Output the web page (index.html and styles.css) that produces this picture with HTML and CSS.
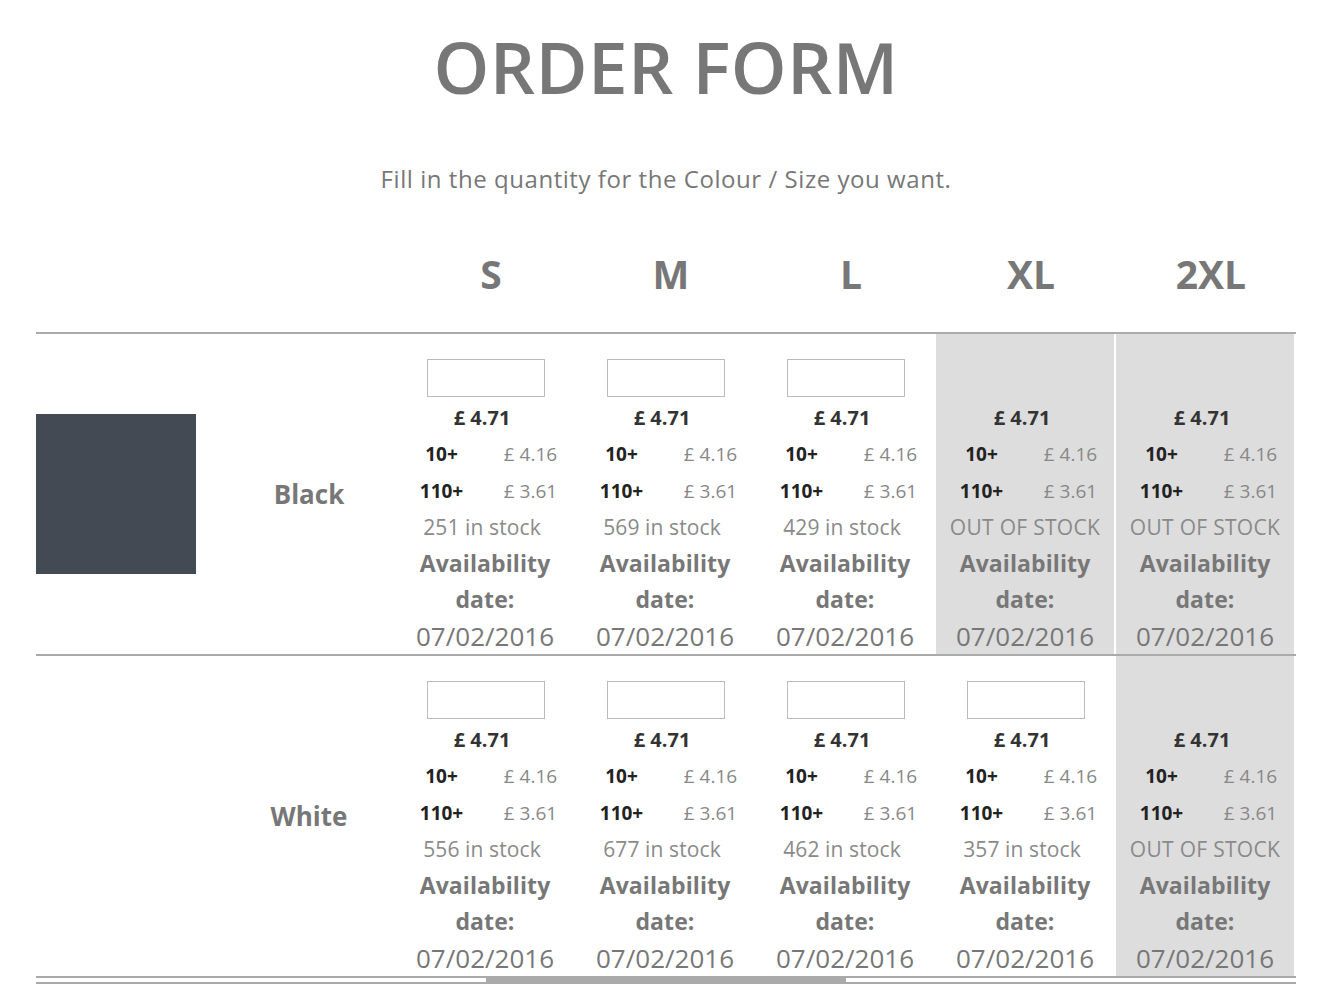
FILE: index.html
```html
<!DOCTYPE html>
<html lang="en">
<head>
<meta charset="utf-8">
<title>Order Form</title>
<link rel="stylesheet" href="styles.css">
</head>
<body>
<div class="page">
  <h1 class="title">ORDER FORM</h1>
  <p class="intro">Fill in the quantity for the Colour / Size you want.</p>

  <div class="sizes">
    <div class="sizes-spacer"></div>
    <div class="size-head">S</div>
    <div class="size-head">M</div>
    <div class="size-head">L</div>
    <div class="size-head">XL</div>
    <div class="size-head">2XL</div>
  </div>

  <div class="grid">
    <div class="row">
      <div class="swatch-cell"><div class="swatch swatch-black"></div></div>
      <div class="name-cell">Black</div>
      <div class="cell">
        <input class="qty" type="text">
        <div class="price">£ 4.71</div>
        <div class="tier"><span class="tier-qty">10+</span><span class="tier-price">£ 4.16</span></div>
        <div class="tier"><span class="tier-qty">110+</span><span class="tier-price">£ 3.61</span></div>
        <div class="stock">251 in stock</div>
        <div class="avail">Availability</div>
        <div class="avail">date:</div>
        <div class="date">07/02/2016</div>
      </div>
      <div class="cell">
        <input class="qty" type="text">
        <div class="price">£ 4.71</div>
        <div class="tier"><span class="tier-qty">10+</span><span class="tier-price">£ 4.16</span></div>
        <div class="tier"><span class="tier-qty">110+</span><span class="tier-price">£ 3.61</span></div>
        <div class="stock">569 in stock</div>
        <div class="avail">Availability</div>
        <div class="avail">date:</div>
        <div class="date">07/02/2016</div>
      </div>
      <div class="cell">
        <input class="qty" type="text">
        <div class="price">£ 4.71</div>
        <div class="tier"><span class="tier-qty">10+</span><span class="tier-price">£ 4.16</span></div>
        <div class="tier"><span class="tier-qty">110+</span><span class="tier-price">£ 3.61</span></div>
        <div class="stock">429 in stock</div>
        <div class="avail">Availability</div>
        <div class="avail">date:</div>
        <div class="date">07/02/2016</div>
      </div>
      <div class="cell cell-out">
        <div class="qty-spacer"></div>
        <div class="price">£ 4.71</div>
        <div class="tier"><span class="tier-qty">10+</span><span class="tier-price">£ 4.16</span></div>
        <div class="tier"><span class="tier-qty">110+</span><span class="tier-price">£ 3.61</span></div>
        <div class="stock">OUT OF STOCK</div>
        <div class="avail">Availability</div>
        <div class="avail">date:</div>
        <div class="date">07/02/2016</div>
      </div>
      <div class="cell cell-out">
        <div class="qty-spacer"></div>
        <div class="price">£ 4.71</div>
        <div class="tier"><span class="tier-qty">10+</span><span class="tier-price">£ 4.16</span></div>
        <div class="tier"><span class="tier-qty">110+</span><span class="tier-price">£ 3.61</span></div>
        <div class="stock">OUT OF STOCK</div>
        <div class="avail">Availability</div>
        <div class="avail">date:</div>
        <div class="date">07/02/2016</div>
      </div>
    </div>

    <div class="row">
      <div class="swatch-cell"><div class="swatch swatch-white"></div></div>
      <div class="name-cell">White</div>
      <div class="cell">
        <input class="qty" type="text">
        <div class="price">£ 4.71</div>
        <div class="tier"><span class="tier-qty">10+</span><span class="tier-price">£ 4.16</span></div>
        <div class="tier"><span class="tier-qty">110+</span><span class="tier-price">£ 3.61</span></div>
        <div class="stock">556 in stock</div>
        <div class="avail">Availability</div>
        <div class="avail">date:</div>
        <div class="date">07/02/2016</div>
      </div>
      <div class="cell">
        <input class="qty" type="text">
        <div class="price">£ 4.71</div>
        <div class="tier"><span class="tier-qty">10+</span><span class="tier-price">£ 4.16</span></div>
        <div class="tier"><span class="tier-qty">110+</span><span class="tier-price">£ 3.61</span></div>
        <div class="stock">677 in stock</div>
        <div class="avail">Availability</div>
        <div class="avail">date:</div>
        <div class="date">07/02/2016</div>
      </div>
      <div class="cell">
        <input class="qty" type="text">
        <div class="price">£ 4.71</div>
        <div class="tier"><span class="tier-qty">10+</span><span class="tier-price">£ 4.16</span></div>
        <div class="tier"><span class="tier-qty">110+</span><span class="tier-price">£ 3.61</span></div>
        <div class="stock">462 in stock</div>
        <div class="avail">Availability</div>
        <div class="avail">date:</div>
        <div class="date">07/02/2016</div>
      </div>
      <div class="cell">
        <input class="qty" type="text">
        <div class="price">£ 4.71</div>
        <div class="tier"><span class="tier-qty">10+</span><span class="tier-price">£ 4.16</span></div>
        <div class="tier"><span class="tier-qty">110+</span><span class="tier-price">£ 3.61</span></div>
        <div class="stock">357 in stock</div>
        <div class="avail">Availability</div>
        <div class="avail">date:</div>
        <div class="date">07/02/2016</div>
      </div>
      <div class="cell cell-out">
        <div class="qty-spacer"></div>
        <div class="price">£ 4.71</div>
        <div class="tier"><span class="tier-qty">10+</span><span class="tier-price">£ 4.16</span></div>
        <div class="tier"><span class="tier-qty">110+</span><span class="tier-price">£ 3.61</span></div>
        <div class="stock">OUT OF STOCK</div>
        <div class="avail">Availability</div>
        <div class="avail">date:</div>
        <div class="date">07/02/2016</div>
      </div>
    </div>
  </div>

  <div class="scroll-track"><div class="scroll-thumb"></div></div>
</div>
</body>
</html>
```

FILE: styles.css
```css
html, body {
  margin: 0;
  padding: 0;
  background: #fff;
}

body {
  font-family: "Open Sans", "Noto Sans", sans-serif;
  color: #777;
}

.page {
  width: 1260px;
  margin-left: 36px;
  padding-top: 22px;
}

.title {
  margin: 0;
  text-align: center;
  font-size: 71px;
  font-weight: 600;
  line-height: 90px;
  color: #777;
  letter-spacing: 0.4px;
}

.intro {
  margin: 49px 0 0 0;
  text-align: center;
  font-size: 24px;
  line-height: 36px;
  color: #777;
  letter-spacing: 0.55px;
  padding-left: 0;
}

.sizes {
  display: grid;
  grid-template-columns: 360px repeat(5, 180px);
  margin-top: 47px;
  height: 88px;
}

.size-head {
  text-align: center;
  padding-left: 10px;
  font-size: 39px;
  font-weight: 700;
  line-height: 60px;
  color: #777;
}

.grid {
  border-top: 2px solid #aaa;
}

.row {
  display: grid;
  grid-template-columns: 160px 200px repeat(5, 180px);
  height: 320px;
  border-bottom: 2px solid #aaa;
}

.swatch-cell {
  display: flex;
  align-items: center;
}

.swatch {
  width: 160px;
  height: 160px;
}

.swatch-black {
  background: #444a54;
}

.swatch-white {
  background: #fff;
}

.name-cell {
  display: flex;
  align-items: center;
  justify-content: center;
  padding-left: 26px;
  font-size: 26px;
  font-weight: 700;
  color: #777;
}

.cell {
  box-sizing: border-box;
  border-right: 2px solid #fff;
  padding-top: 24px;
  text-align: center;
  line-height: 36.3px;
  overflow: hidden;
}

.cell-out {
  background: #ddd;
}

.qty {
  display: block;
  box-sizing: border-box;
  width: 118px;
  height: 38px;
  margin: 1px auto 3px 31px;
  border: 1px solid #bbb;
  background: #fff;
  padding: 0;
  outline: none;
}

.qty-spacer {
  height: 38px;
  margin: 1px 0 3px 0;
}

.price {
  font-size: 20px;
  font-weight: 700;
  color: #333;
  padding-right: 6px;
}

.tier {
  display: grid;
  grid-template-columns: 1fr 1fr;
  font-size: 19px;
}

.tier-qty {
  font-weight: 700;
  color: #222;
  padding-left: 2px;
}

.tier-price {
  color: #888;
  padding-left: 2px;
}

.stock {
  font-size: 21px;
  color: #8a8a8a;
  letter-spacing: 0.1px;
  padding-right: 6px;
}

.cell-out .stock {
  letter-spacing: 0.3px;
  padding-right: 0;
}

.avail {
  font-size: 23px;
  font-weight: 700;
  color: #777;
  letter-spacing: 0.1px;
}

.date {
  font-size: 26px;
  color: #777;
  letter-spacing: 0;
}

.scroll-track {
  height: 4px;
  border-bottom: 2px solid #aaa;
}

.scroll-thumb {
  width: 360px;
  height: 4px;
  margin-left: 450px;
  background: #aaa;
}
```
